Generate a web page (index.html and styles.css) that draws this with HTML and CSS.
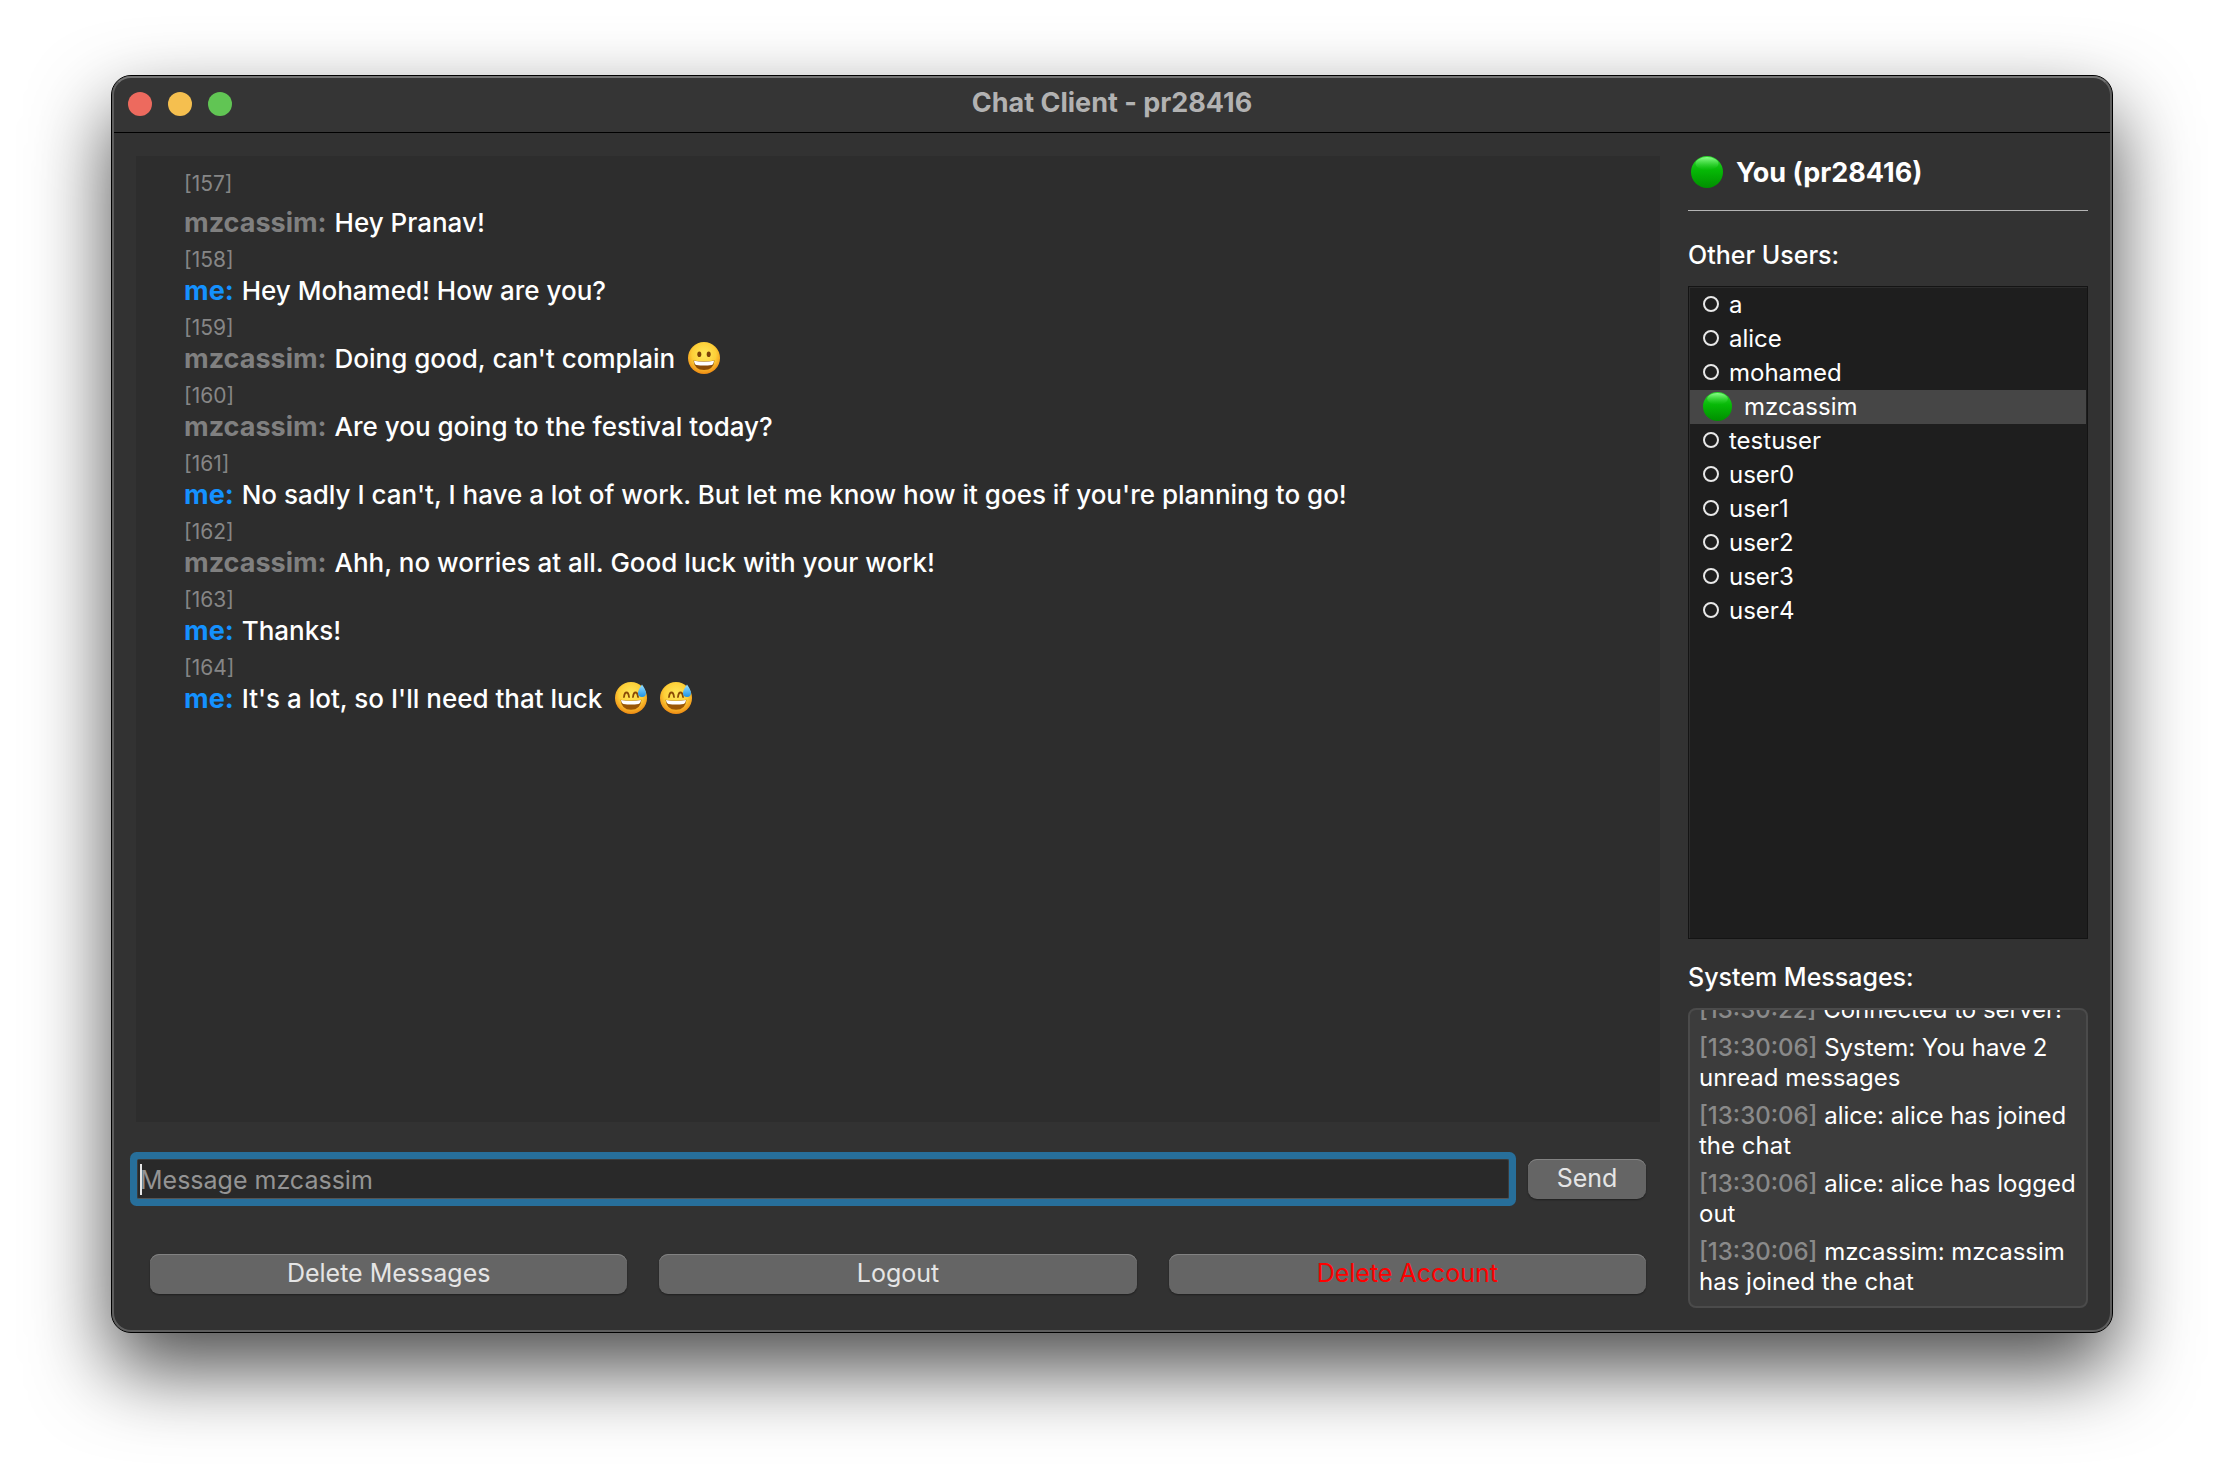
FILE: index.html
```
<!DOCTYPE html>
<html lang="en">
<head>
<meta charset="utf-8">
<title>Chat Client - pr28416</title>
<link rel="stylesheet" href="styles.css">
</head>
<body>
<svg class="defs" width="0" height="0" aria-hidden="true">
  <defs>
    <radialGradient id="face" cx="50%" cy="38%" r="62%">
      <stop offset="0" stop-color="#ffe95c"/>
      <stop offset=".6" stop-color="#fdcf38"/>
      <stop offset="1" stop-color="#ee8a12"/>
    </radialGradient>
    <linearGradient id="drop" x1="0" y1="0" x2="0" y2="1">
      <stop offset="0" stop-color="#9be2ff"/>
      <stop offset="1" stop-color="#1d93e6"/>
    </linearGradient>
    <linearGradient id="online" x1="0" y1="0" x2="0" y2="1">
      <stop offset="0" stop-color="#2fd52f"/>
      <stop offset=".45" stop-color="#06b806"/>
      <stop offset="1" stop-color="#008f00"/>
    </linearGradient>
    <linearGradient id="gloss" x1="0" y1="0" x2="0" y2="1">
      <stop offset="0" stop-color="#8dff8d"/>
      <stop offset="1" stop-color="#2ad02a" stop-opacity="0"/>
    </linearGradient>
    <symbol id="grin" viewBox="0 0 32 32">
      <circle cx="16" cy="16" r="16" fill="url(#face)"/>
      <ellipse cx="11.300" cy="12.300" rx="2" ry="2.800" fill="#7a4008"/>
      <ellipse cx="20.700" cy="12.300" rx="2" ry="2.800" fill="#7a4008"/>
      <path d="M5.500 18.500Q16 20.500 26.500 18.500Q25.500 28 16 28Q6.500 28 5.500 18.500Z" fill="#8a4b06"/>
      <path d="M6 18.700Q16 20.600 26 18.700Q25.500 22.800 23.500 23Q16 24 8.500 23Q6.500 22.800 6 18.700Z" fill="#fff"/>
    </symbol>
    <symbol id="sweat" viewBox="0 0 32 32">
      <circle cx="16" cy="16" r="16" fill="url(#face)"/>
      <path d="M9 15Q9.500 10.500 11.500 10.500T14 15M18 15Q18.500 10.500 20.500 10.500T23 15" fill="none" stroke="#8a4b06" stroke-width="1.800" stroke-linecap="round"/>
      <path d="M5.500 17.800Q16 19.800 26.500 17.800Q25.500 27.800 16 27.800Q6.500 27.800 5.500 17.800Z" fill="#9a5606"/>
      <path d="M6 18Q16 20 26 18Q25.500 21.500 23.500 22Q16 23 8.500 22Q6.500 21.500 6 18Z" fill="#fff"/>
      <path d="M27 2.500Q31 8 31 11A4 4 0 0 1 23 11Q23 8 27 2.500Z" fill="url(#drop)"/>
    </symbol>
    <symbol id="dot" viewBox="0 0 32 32">
      <circle cx="16" cy="16" r="16" fill="url(#online)"/>
      <ellipse cx="16" cy="7.500" rx="11.500" ry="6.500" fill="url(#gloss)"/>
    </symbol>
  </defs>
</svg>
<div class="window">
  <header class="titlebar">
    <div class="lights">
      <button class="light close" type="button" aria-label="Close"></button>
      <button class="light minimize" type="button" aria-label="Minimize"></button>
      <button class="light zoom" type="button" aria-label="Zoom"></button>
    </div>
    <h1 class="title">Chat Client - pr28416</h1>
  </header>
  <div class="content">
    <main class="chat">
      <ol class="messages">
        <li class="message first"><span class="id">[157]</span><p class="line"><b class="from">mzcassim:</b> Hey Pranav!</p></li>
        <li class="message"><span class="id">[158]</span><p class="line"><b class="from me">me:</b> Hey Mohamed! How are you?</p></li>
        <li class="message"><span class="id">[159]</span><p class="line"><b class="from">mzcassim:</b> Doing good, can't complain <svg class="emoji" role="img" aria-label="grinning face"><use href="#grin"/></svg></p></li>
        <li class="message"><span class="id">[160]</span><p class="line"><b class="from">mzcassim:</b> Are you going to the festival today?</p></li>
        <li class="message"><span class="id">[161]</span><p class="line"><b class="from me">me:</b> No sadly I can't, I have a lot of work. But let me know how it goes if you're planning to go!</p></li>
        <li class="message"><span class="id">[162]</span><p class="line"><b class="from">mzcassim:</b> Ahh, no worries at all. Good luck with your work!</p></li>
        <li class="message"><span class="id">[163]</span><p class="line"><b class="from me">me:</b> Thanks!</p></li>
        <li class="message"><span class="id">[164]</span><p class="line"><b class="from me">me:</b> It's a lot, so I'll need that luck <svg class="emoji" role="img" aria-label="grinning face with sweat"><use href="#sweat"/></svg> <svg class="emoji" role="img" aria-label="grinning face with sweat"><use href="#sweat"/></svg></p></li>
      </ol>
      <form class="composer">
        <div class="field">
          <input class="input" type="text" placeholder="Message mzcassim" aria-label="Message mzcassim">
          <span class="caret"></span>
        </div>
        <button class="button send" type="button">Send</button>
      </form>
      <div class="actions">
        <button class="button" type="button">Delete Messages</button>
        <button class="button" type="button">Logout</button>
        <button class="button danger" type="button">Delete Account</button>
      </div>
    </main>
    <aside class="sidebar">
      <div class="self"><svg class="self-dot" aria-hidden="true"><use href="#dot"/></svg>You (pr28416)</div>
      <h2 class="label users-label">Other Users:</h2>
      <ul class="users">
        <li class="user"><span class="offline"></span>a</li>
        <li class="user"><span class="offline"></span>alice</li>
        <li class="user"><span class="offline"></span>mohamed</li>
        <li class="user selected"><svg class="user-dot" aria-hidden="true"><use href="#dot"/></svg>mzcassim</li>
        <li class="user"><span class="offline"></span>testuser</li>
        <li class="user"><span class="offline"></span>user0</li>
        <li class="user"><span class="offline"></span>user1</li>
        <li class="user"><span class="offline"></span>user2</li>
        <li class="user"><span class="offline"></span>user3</li>
        <li class="user"><span class="offline"></span>user4</li>
      </ul>
      <h2 class="label system-label">System Messages:</h2>
      <div class="system">
        <p class="entry"><time class="time">[13:30:22]</time> Connected to server!</p>
        <p class="entry"><time class="time">[13:30:06]</time> System: You have 2 unread messages</p>
        <p class="entry"><time class="time">[13:30:06]</time> alice: alice has joined the chat</p>
        <p class="entry"><time class="time">[13:30:06]</time> alice: alice has logged out</p>
        <p class="entry"><time class="time">[13:30:06]</time> mzcassim: mzcassim has joined the chat</p>
      </div>
    </aside>
  </div>
</div>
</body>
</html>
```
FILE: styles.css
```
* {
  box-sizing: border-box;
}

body {
  display: flex;
  flex-direction: column;
  min-height: 100vh;
  margin: 0;
  padding: 75px 111px 147px;
  background: #fff;
  color: #fff;
  font-family: Inter, "Liberation Sans", sans-serif;
  font-size: 27px;
}

h1, h2, p, ol, ul {
  margin: 0;
  padding: 0;
  font-size: inherit;
  font-weight: inherit;
  list-style: none;
}

.defs {
  position: absolute;
}

.window {
  position: relative;
  display: flex;
  flex: 1;
  flex-direction: column;
  border: 1px solid #000;
  border-radius: 20px;
  background: #323232;
  box-shadow: 0 36px 80px rgba(0, 0, 0, 0.7);
}

/* Light rim just inside the window edge */
.window::after {
  content: "";
  position: absolute;
  inset: 0;
  border: 2px solid #5e5e5e;
  border-top-color: #747474;
  border-radius: 19px;
  pointer-events: none;
}

.titlebar {
  display: grid;
  grid-template-columns: 1fr auto 1fr;
  align-items: center;
  height: 57px;
  padding: 0 16px;
  border-bottom: 1px solid #000;
  border-radius: 19px 19px 0 0;
  background: #353535;
}

.lights {
  display: flex;
  gap: 16px;
}

.light {
  width: 24px;
  height: 24px;
  padding: 0;
  border: 0;
  border-radius: 50%;
}

.close { background: #ed6a5e; }
.minimize { background: #f5bf4f; }
.zoom { background: #61c554; }

.title {
  padding-bottom: 3px;
  color: #b2b2b2;
  font-weight: 700;
}

.content {
  display: grid;
  flex: 1;
  grid-template-columns: 1fr 400px;
  gap: 28px;
  padding: 23px 24px 24px;
}

.chat {
  display: flex;
  flex-direction: column;
  padding-bottom: 14px;
}

.messages {
  display: flex;
  flex: 1;
  flex-direction: column;
  gap: 7px;
  padding: 16px 48px;
  background: #2d2d2d;
}

.message {
  display: flex;
  flex-direction: column;
  gap: 1px;
}

.first {
  gap: 9px;
}

.id {
  color: #868686;
  font-size: 21px;
  line-height: 24px;
}

.line {
  height: 36px;
  font-size: 26px;
  font-weight: 500;
  line-height: 36px;
}

.from {
  margin-right: 1px;
  color: #808080;
  font-size: 27px;
  font-weight: 700;
}

.me {
  color: #1491ff;
}

.emoji {
  width: 32px;
  height: 32px;
  margin-left: 6px;
  vertical-align: -6px;
}

.composer {
  display: flex;
  gap: 19px;
  margin: 37px 14px 55px 1px;
}

.field {
  position: relative;
  flex: 1;
}

.input {
  display: block;
  width: 100%;
  height: 40px;
  padding: 2px 2px 0;
  border: 1px solid #3c3c3c;
  border-bottom-color: #555;
  border-radius: 2px;
  outline: 0;
  background: #292929;
  box-shadow: 0 0 0 7px #276f9b;
  color: #fff;
  font-family: inherit;
  font-size: 25px;
}

.input::placeholder {
  color: #949494;
  opacity: 1;
}

.caret {
  position: absolute;
  top: 5px;
  left: 3px;
  width: 2px;
  height: 31px;
  background: #e6e6e6;
}

.button {
  flex: 1;
  height: 40px;
  padding: 0 0 3px;
  border: 0;
  border-radius: 9px;
  background: #656565;
  box-shadow: inset 0 1px #828282, 0 1px 2px rgba(0, 0, 0, 0.4);
  color: #e5e5e5;
  font-family: inherit;
  font-size: 25px;
}

.send {
  flex: 0 0 118px;
}

.danger {
  color: #f00;
}

.actions {
  display: flex;
  gap: 32px;
  padding: 0 14px;
}

.sidebar {
  display: flex;
  flex-direction: column;
}

.self {
  display: flex;
  gap: 13px;
  align-items: center;
  height: 55px;
  padding: 0 3px 22px;
  border-bottom: 1px solid #b4b4b4;
  font-weight: 700;
}

.self-dot {
  width: 32px;
  height: 32px;
}

.label {
  font-size: 25px;
  font-weight: 500;
  line-height: 32px;
}

.users-label {
  margin: 28px 0 15px;
}

.system-label {
  margin: 22px 0 15px;
}

.users {
  flex: 1;
  padding: 1px;
  border: 1px solid #141414;
  background: #1e1e1e;
  box-shadow: inset 1px 1px #2c2c2c;
}

.user {
  display: flex;
  gap: 10px;
  align-items: center;
  height: 34px;
  padding: 0 0 2px 13px;
  font-size: 24px;
}

.selected {
  gap: 12px;
  background: #464646;
}

.offline {
  width: 16px;
  height: 16px;
  border: 2px solid #e8e8e8;
  border-radius: 50%;
}

.user-dot {
  width: 29px;
  height: 29px;
}

.system {
  display: flex;
  flex-direction: column;
  gap: 8px;
  justify-content: flex-end;
  height: 300px;
  padding: 0 9px 9px;
  border: 2px solid #4b4b4b;
  border-radius: 8px;
  overflow: hidden;
  background: #3c3c3c;
  font-size: 24px;
  line-height: 30px;
}

.time {
  color: #8a8a8a;
  font-weight: 500;
}
```
